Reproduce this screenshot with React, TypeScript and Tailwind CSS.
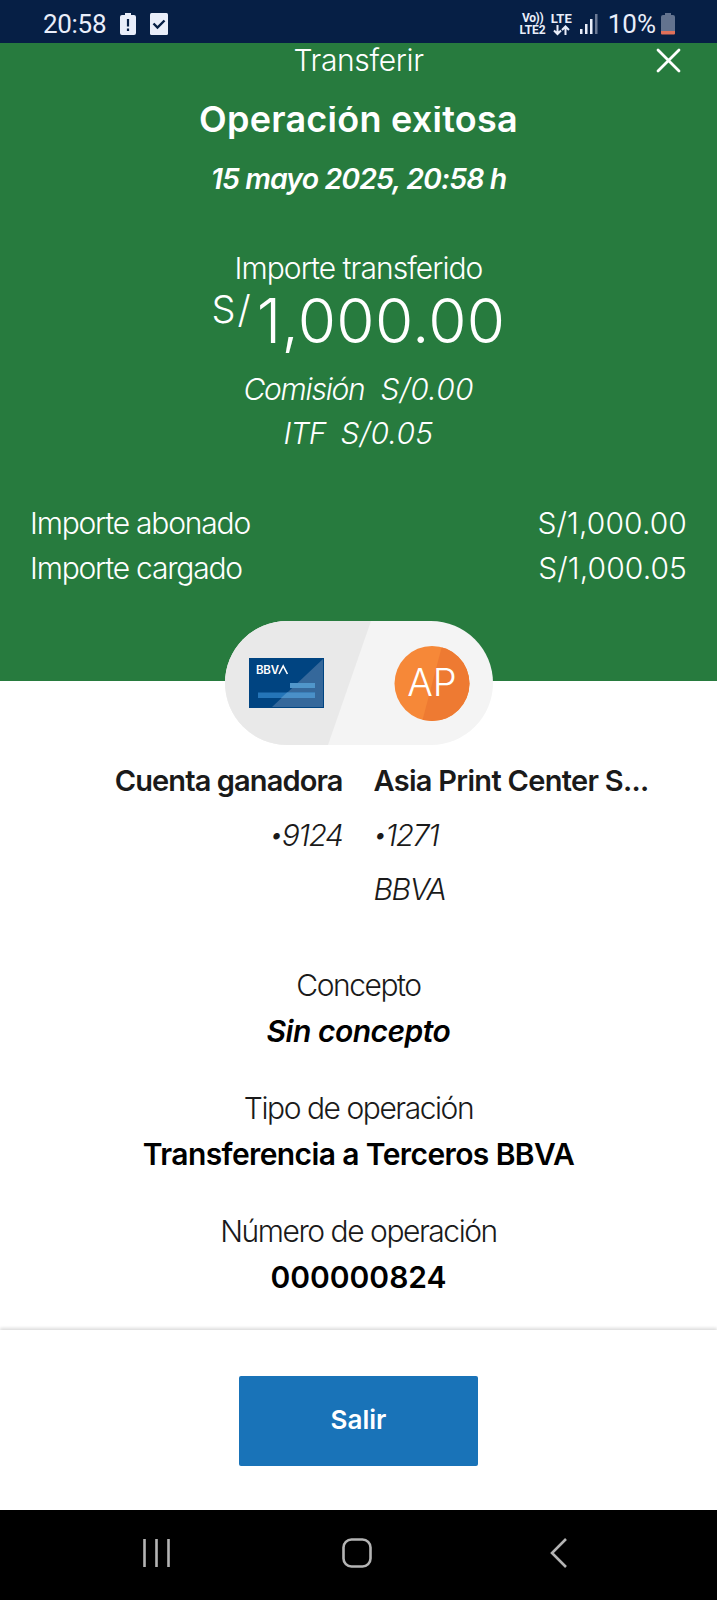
import React from 'react';

function StatusBar() {
  return (
    <div className="h-[43px] bg-[#061f45] text-[#e9eefa] font-['Roboto',sans-serif] font-normal flex items-center justify-between pl-[43px] pr-[42px] pt-[5px]">
      <div className="flex items-center">
        <span className="text-[26px] leading-none tracking-[-0.3px]">20:58</span>
        <svg className="ml-[14px]" width="16" height="22" viewBox="0 0 16 22">
          <path d="M5 0h6v2h3a2 2 0 0 1 2 2v16a2 2 0 0 1-2 2H2a2 2 0 0 1-2-2V4a2 2 0 0 1 2-2h3z" fill="#e9eefa" />
          <path d="M8 6v7.500M8 15.500v2.500" stroke="#061f45" strokeWidth="2.200" />
        </svg>
        <svg className="ml-[14px]" width="18" height="22" viewBox="0 0 18 22">
          <rect width="18" height="22" rx="1.500" fill="#e9eefa" />
          <path d="M3.500 10.500l4 4 7-7" fill="none" stroke="#061f45" strokeWidth="2.400" />
        </svg>
      </div>
      <div className="flex items-center">
        <div className="flex flex-col items-center text-[12px] leading-[12px] font-bold">
          <span className="tracking-[-0.4px]">Vo))</span>
          <span>LTE2</span>
        </div>
        <div className="ml-[5px] flex flex-col items-center text-[13px] leading-[12px] font-bold">
          <span>LTE</span>
          <svg width="17" height="11" viewBox="0 0 17 11" fill="none" stroke="#e9eefa" strokeWidth="2">
            <path d="M4.500 0v9M1 5.500L4.500 9 8 5.500M12.500 10V1.500M9 5l3.500-3.500L16 5" />
          </svg>
        </div>
        <svg className="ml-[8px]" width="18" height="20" viewBox="0 0 18 20">
          <rect x="0" y="15" width="2.500" height="5" fill="#e9eefa" />
          <rect x="5" y="10" width="2.500" height="10" fill="#e9eefa" />
          <rect x="10" y="5" width="2.500" height="15" fill="#e9eefa" />
          <rect x="15" y="0" width="2.500" height="20" fill="#6b7a96" />
        </svg>
        <span className="ml-[10px] text-[26px] leading-none">10%</span>
        <svg className="ml-[5px]" width="14" height="22" viewBox="0 0 14 22">
          <path d="M4 0h6v2h2a2 2 0 0 1 2 2v15H0V4a2 2 0 0 1 2-2h2z" fill="#63738f" />
          <path d="M0 18h14v2.500a1 1 0 0 1-1 1H1a1 1 0 0 1-1-1z" fill="#e0715a" />
        </svg>
      </div>
    </div>
  );
}

function AmountRow({ label, value }: { label: string; value: string }) {
  return (
    <div className="flex justify-between h-[45px] leading-[45px]">
      <span className="tracking-[-1.2px]">{label}</span>
      <span className="tracking-[0.1px]">{value}</span>
    </div>
  );
}

function AccountNumber({ digits }: { digits: string }) {
  return (
    <p className="h-[54px] italic tracking-[-1.5px]">
      <span className="text-[24px] leading-none align-[3px]">•</span>
      {digits}
    </p>
  );
}

function AccountsPill() {
  return (
    <svg className="block mx-auto" width="268" height="124" viewBox="0 0 268 124">
      <defs>
        <clipPath id="pill">
          <rect width="268" height="124" rx="62" />
        </clipPath>
        <clipPath id="avatar">
          <circle cx="207" cy="62.500" r="37.500" />
        </clipPath>
      </defs>
      <g clipPath="url(#pill)">
        <rect width="268" height="124" fill="#f4f4f4" />
        <path d="M0 0h146L103 124H0z" fill="#e9e9e9" />
      </g>
      <rect x="24" y="37" width="75" height="50" fill="#004481" />
      <path d="M98 38v48H47z" fill="#35689b" />
      <rect x="65" y="62" width="25" height="5" fill="#5096ca" />
      <rect x="33" y="71.500" width="57" height="5.500" fill="#2475b8" />
      <path d="M62 71.500h28v5.500H56z" fill="#4a90c8" />
      <text x="31" y="53" fontSize="11.500" fontWeight="600" fill="#fff" textLength="23">BBV</text>
      <path d="M54 53l4.200-8 4.200 8" fill="none" stroke="#fff" strokeWidth="1.600" />
      <g clipPath="url(#avatar)">
        <rect x="169" y="25" width="76" height="76" fill="#f68838" />
        <path d="M217 25h30v76h-50z" fill="#ee7a32" />
      </g>
      <text x="207" y="75" textAnchor="middle" fontSize="38" fontWeight="300" fill="#fff">AP</text>
    </svg>
  );
}

export default function App() {
  return (
    <div className="w-[717px] h-[1600px] overflow-hidden flex flex-col bg-white text-[30px] font-light font-['Inter',sans-serif]">
      <StatusBar />

      <div className="h-[638px] bg-[#277b3e] text-white">
        <div className="h-[63px] grid grid-cols-[1fr_auto_1fr] px-[36px]">
          <span />
          <span className="leading-[34px] tracking-[-0.35px]">Transferir</span>
          <svg className="justify-self-end mt-[5px]" width="25" height="25" viewBox="0 0 25 25">
            <path d="M2 2l21 21M23 2L2 23" stroke="#fff" strokeWidth="2.800" strokeLinecap="round" />
          </svg>
        </div>
        <div className="px-[30px] overflow-hidden text-center">
          <h1 className="text-[36px] leading-[38px] -mt-[6px] h-[42px] font-semibold tracking-[0.25px]">Operación exitosa</h1>
          <p className="mt-[15px] text-[28.5px] leading-[44px] font-semibold italic tracking-[-0.9px]">15 mayo 2025, 20:58 h</p>
          <p className="mt-[45px] leading-[44px] tracking-[-0.95px]">Importe transferido</p>
          <div className="flex justify-center h-[60px]">
            <span className="text-[38px] leading-[38px] tracking-[2px] mr-[4px]">S/</span>
            <span className="text-[62px] leading-[61px] tracking-[0.3px]">1,000.00</span>
          </div>
          <p className="mt-[17px] leading-[44px] italic">
            <span className="tracking-[-1.2px]">Comisión</span>
            <span className="ml-[16px] tracking-[0.2px]">S/0.00</span>
          </p>
          <p className="leading-[45px] italic">
            <span className="tracking-[-0.9px]">ITF</span>
            <span className="ml-[15px] tracking-[0.3px]">S/0.05</span>
          </p>
          <div className="mt-[45px]">
            <AmountRow label="Importe abonado" value="S/1,000.00" />
            <AmountRow label="Importe cargado" value="S/1,000.05" />
          </div>
        </div>
      </div>

      <div className="h-[649px] text-[#1a1a1a]">
        <div className="relative -mt-[60px]">
          <AccountsPill />
        </div>
        <div className="grid grid-cols-2 gap-x-[30px] mt-[9px] leading-[54px]">
          <div className="text-right pr-[1px]">
            <p className="text-[29px] font-semibold tracking-[-0.9px]">Cuenta ganadora</p>
            <AccountNumber digits="9124" />
          </div>
          <div>
            <p className="text-[29px] font-semibold tracking-[-0.7px]">Asia Print Center S...</p>
            <AccountNumber digits="1271" />
            <p className="italic tracking-[-1.4px]">BBVA</p>
          </div>
        </div>
        <div className="mt-[46px] text-center leading-[46px]">
          <p className="tracking-[-1.45px]">Concepto</p>
          <p className="font-semibold italic text-black tracking-[-0.5px]">Sin concepto</p>
          <p className="mt-[31px] tracking-[-1.45px]">Tipo de operación</p>
          <p className="font-semibold text-black tracking-[-0.6px]">Transferencia a Terceros BBVA</p>
          <p className="mt-[31px] tracking-[-1.45px]">Número de operación</p>
          <p className="font-semibold text-black">000000824</p>
        </div>
      </div>

      <div className="h-[180px] bg-white shadow-[0_-2px_3px_#dddddd] flex justify-center pt-[46px]">
        <button className="w-[239px] h-[90px] pb-[3px] rounded-[2px] bg-[#1973b8] text-white text-[26px] font-semibold">Salir</button>
      </div>

      <div className="h-[90px] bg-black flex items-center pl-[143px] pb-[4px]">
        <svg width="28" height="30" viewBox="0 0 28 30" stroke="#b4b4b4" strokeWidth="2.600">
          <path d="M1.500 1v28M13.500 1v28M25.500 1v28" />
        </svg>
        <svg className="ml-[171px]" width="30" height="30" viewBox="0 0 30 30" fill="none" stroke="#b4b4b4" strokeWidth="2.600">
          <rect x="1.500" y="1.500" width="27" height="27" rx="8" />
        </svg>
        <svg className="ml-[178px]" width="17" height="30" viewBox="0 0 17 30" fill="none" stroke="#b4b4b4" strokeWidth="2.600">
          <path d="M16 1L2 15l14 14" />
        </svg>
      </div>
    </div>
  );
}
